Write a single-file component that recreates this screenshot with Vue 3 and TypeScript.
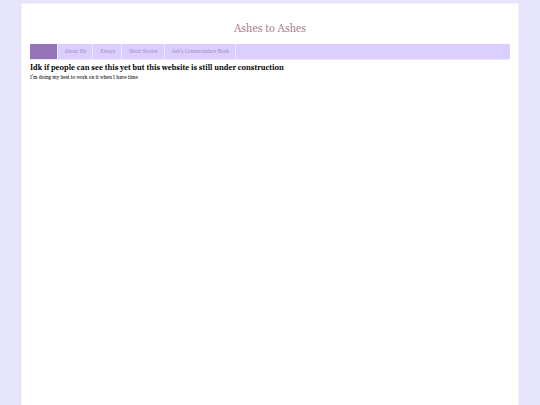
<script setup lang="ts">
interface NavLink {
  label: string
  href: string
  current?: boolean
}

const links: NavLink[] = [
  { label: 'Home', href: '#home', current: true },
  { label: 'About Me', href: '#about' },
  { label: 'Essays', href: '#essays' },
  { label: 'Short Stories', href: '#stories' },
  { label: "Ash's Commonplace Book", href: '#commonplace' },
]
</script>

<template>
  <div class="page">
    <header class="masthead">
      <div class="title">Ashes to Ashes</div>
    </header>
    <nav class="nav">
      <a
        v-for="link in links"
        :key="link.href"
        :href="link.href"
        class="link"
        :class="{ current: link.current }"
        :aria-current="link.current ? 'page' : undefined"
      >{{ link.label }}</a>
    </nav>
    <main>
      <h1>Idk if people can see this yet but this website is still under construction</h1>
      <p>I'm doing my best to work on it when I have time</p>
    </main>
  </div>
</template>

<style>
body {
  margin: 0;
  background: #e7e5fb;
}
</style>

<style scoped>
.page {
  box-sizing: border-box;
  min-height: calc(100vh - 3px);
  margin: 3px 21px 0;
  padding: 0 8px;
  border: 1px solid #f3f2fd;
  border-bottom: 0;
  background: #fff;
  color: #000;
  font-family: Gelasio, Georgia, "Liberation Serif", serif;
}

.masthead {
  padding: 17px 0 7px;
  text-align: center;
}

.title {
  color: #b08490;
  font-size: 11px;
  line-height: 16px;
}

.nav {
  display: flex;
  background: #dbcfff;
  border-bottom: 1px solid #ede7ff;
}

.link {
  padding: 0 6px 0 7px;
  border-right: 1px solid #eee8ff;
  color: #a88bcb;
  font-size: 5px;
  line-height: 15px;
  text-decoration: none;
  white-space: nowrap;
}

.current {
  background: #9575b8;
  color: #9575b8;
}

h1 {
  margin: 3px 0 0;
  font-size: 7px;
  line-height: 10px;
}

p {
  margin: 1px 0 0;
  font-size: 5px;
  line-height: 8px;
}
</style>
